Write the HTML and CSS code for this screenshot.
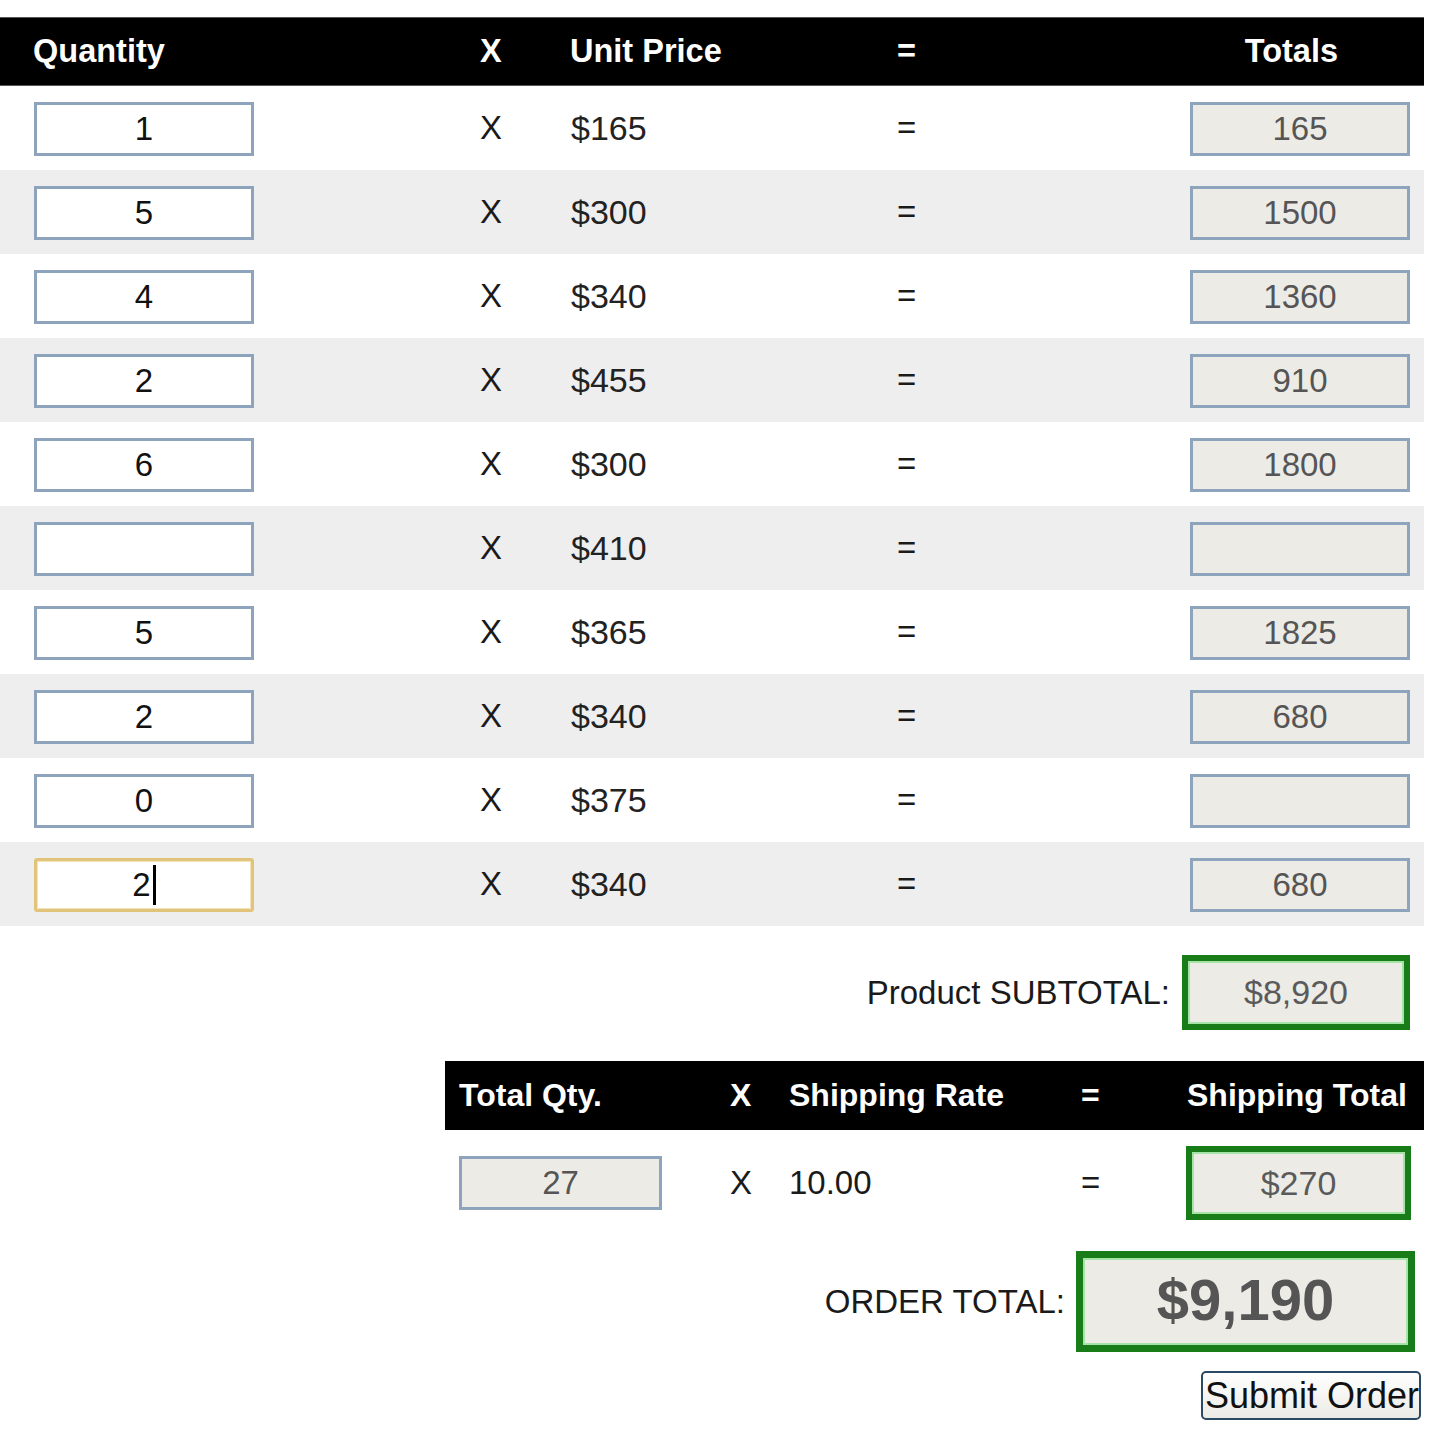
FILE: index.html
```html
<!DOCTYPE html>
<html>
<head>
<meta charset="utf-8">
<title>Order Form</title>
<link rel="stylesheet" href="styles.css">
</head>
<body>
<div class="page">
  <div class="order-table">
    <div class="row head">
      <div class="c-qty">Quantity</div>
      <div class="c-x">X</div>
      <div class="c-price">Unit Price</div>
      <div class="c-eq">=</div>
      <div class="c-total">Totals</div>
    </div>
    <div class="row">
      <div class="c-qty"><div class="field">1</div></div>
      <div class="c-x">X</div><div class="c-price">$165</div><div class="c-eq">=</div>
      <div class="c-total"><div class="field ro">165</div></div>
    </div>
    <div class="row alt">
      <div class="c-qty"><div class="field">5</div></div>
      <div class="c-x">X</div><div class="c-price">$300</div><div class="c-eq">=</div>
      <div class="c-total"><div class="field ro">1500</div></div>
    </div>
    <div class="row">
      <div class="c-qty"><div class="field">4</div></div>
      <div class="c-x">X</div><div class="c-price">$340</div><div class="c-eq">=</div>
      <div class="c-total"><div class="field ro">1360</div></div>
    </div>
    <div class="row alt">
      <div class="c-qty"><div class="field">2</div></div>
      <div class="c-x">X</div><div class="c-price">$455</div><div class="c-eq">=</div>
      <div class="c-total"><div class="field ro">910</div></div>
    </div>
    <div class="row">
      <div class="c-qty"><div class="field">6</div></div>
      <div class="c-x">X</div><div class="c-price">$300</div><div class="c-eq">=</div>
      <div class="c-total"><div class="field ro">1800</div></div>
    </div>
    <div class="row alt">
      <div class="c-qty"><div class="field"></div></div>
      <div class="c-x">X</div><div class="c-price">$410</div><div class="c-eq">=</div>
      <div class="c-total"><div class="field ro"></div></div>
    </div>
    <div class="row">
      <div class="c-qty"><div class="field">5</div></div>
      <div class="c-x">X</div><div class="c-price">$365</div><div class="c-eq">=</div>
      <div class="c-total"><div class="field ro">1825</div></div>
    </div>
    <div class="row alt">
      <div class="c-qty"><div class="field">2</div></div>
      <div class="c-x">X</div><div class="c-price">$340</div><div class="c-eq">=</div>
      <div class="c-total"><div class="field ro">680</div></div>
    </div>
    <div class="row">
      <div class="c-qty"><div class="field">0</div></div>
      <div class="c-x">X</div><div class="c-price">$375</div><div class="c-eq">=</div>
      <div class="c-total"><div class="field ro"></div></div>
    </div>
    <div class="row alt">
      <div class="c-qty"><div class="field focus"><span class="val">2</span><span class="caret"></span></div></div>
      <div class="c-x">X</div><div class="c-price">$340</div><div class="c-eq">=</div>
      <div class="c-total"><div class="field ro">680</div></div>
    </div>
  </div>

  <div class="subtotal">
    <span class="label">Product SUBTOTAL:</span>
    <div class="sum-box">$8,920</div>
  </div>

  <div class="shipping">
    <div class="srow shead">
      <div class="s1">Total Qty.</div>
      <div class="s2">X</div>
      <div class="s3">Shipping Rate</div>
      <div class="s4">=</div>
      <div class="s5">Shipping Total</div>
    </div>
    <div class="srow sbody">
      <div class="s1"><div class="field ro qtyfield">27</div></div>
      <div class="s2">X</div>
      <div class="s3">10.00</div>
      <div class="s4">=</div>
      <div class="s5"><div class="sum-box ship-box">$270</div></div>
    </div>
  </div>

  <div class="order-total">
    <span class="label">ORDER TOTAL:</span>
    <div class="grand-box">$9,190</div>
  </div>

  <div class="submit-row">
    <button class="submit" type="button">Submit Order</button>
  </div>
</div>
</body>
</html>
```

FILE: styles.css
```css
html, body {
  margin: 0;
  padding: 0;
  background: #ffffff;
}
body {
  font-family: "Liberation Sans", Arial, sans-serif;
  font-size: 33px;
  color: #1a1a1a;
}
.page {
  width: 1424px;
  padding-top: 17px;
}

/* main order table */
.row {
  display: grid;
  grid-template-columns: 470px 100px 300px 110px 444px;
  align-items: center;
  height: 84px;
  background: #ffffff;
}
.row.alt {
  background: #eeeeee;
}
.row.head {
  height: 69px;
  background: #000000;
  color: #ffffff;
  font-weight: bold;
  font-size: 32.5px;
  border-top: 1px solid #555;
  border-bottom: 1px solid #555;
  box-sizing: border-box;
}
.c-qty { padding-left: 34px; }
.row.head .c-qty { padding-left: 33px; }
.c-x { padding-left: 10px; }
.c-price { padding-left: 1px; font-size: 34px; color: #222; }
.row.head .c-price { font-size: 32.5px; color: #fff; padding-left: 0; }
.c-eq { padding-left: 27px; }
.c-total { display: flex; justify-content: flex-end; padding-right: 14px; }
.row.head .c-total { padding-right: 86px; }

.field {
  box-sizing: border-box;
  width: 220px;
  height: 54px;
  border: 3px solid #8ea4bd;
  background: #ffffff;
  color: #111;
  font-size: 33px;
  line-height: 48px;
  text-align: center;
  margin-top: 2px;
}
.field.ro {
  background: #ecebe6;
  color: #555555;
}
.field.focus {
  border-color: #e2c37a;
  border-radius: 3px;
  box-shadow: inset 0 0 0 1px #f3e3b8;
  display: flex;
  justify-content: center;
  align-items: center;
}
.caret {
  display: inline-block;
  width: 3px;
  height: 40px;
  background: #000;
  margin-left: 2px;
}

/* subtotal */
.subtotal {
  display: flex;
  justify-content: flex-end;
  align-items: center;
  padding: 29px 14px 31px 0;
  gap: 12px;
}
.label {
  color: #1a1a1a;
  font-size: 33px;
}
.sum-box {
  box-sizing: border-box;
  width: 228px;
  height: 75px;
  border: 6px solid #187c18;
  box-shadow: inset 0 0 0 2px #a6e3a6;
  background: #ecebe6;
  color: #5a5a5a;
  font-size: 34px;
  display: flex;
  align-items: center;
  justify-content: center;
}

/* shipping */
.shipping {
  width: 979px;
  margin-left: auto;
}
.srow {
  display: grid;
  grid-template-columns: 271px 59px 292px 100px 257px;
  align-items: center;
}
.shead {
  height: 69px;
  background: #000;
  color: #fff;
  font-weight: bold;
  font-size: 32px;
}
.sbody {
  height: 106px;
}
.s1, .s2, .s3, .s4 { padding-left: 14px; }
.s5 { padding-left: 19px; }
.shead .s5 { padding-left: 20px; }
.qtyfield {
  width: 203px;
  margin-top: 0;
}
.ship-box {
  width: 225px;
  height: 74px;
}

/* order total */
.order-total {
  display: flex;
  justify-content: flex-end;
  align-items: center;
  gap: 11px;
  padding: 15px 9px 0 0;
}
.grand-box {
  box-sizing: border-box;
  width: 339px;
  height: 101px;
  border: 7px solid #187c18;
  box-shadow: inset 0 0 0 2px #a6e3a6;
  background: #ecebe6;
  color: #555555;
  font-weight: bold;
  font-size: 58px;
  display: flex;
  align-items: center;
  justify-content: center;
  padding-bottom: 4px;
}

/* submit */
.submit-row {
  display: flex;
  justify-content: flex-end;
  padding: 19px 3px 0 0;
}
.submit {
  box-sizing: border-box;
  width: 220px;
  height: 49px;
  border: 2px solid #2a4a66;
  border-radius: 5px;
  background: linear-gradient(#ffffff, #ecebe6);
  font-family: "Liberation Sans", Arial, sans-serif;
  font-size: 36px;
  color: #111;
  padding: 0 0 0 2px;
  text-align: left;
  white-space: nowrap;
  overflow: hidden;
  line-height: 45px;
}
```
